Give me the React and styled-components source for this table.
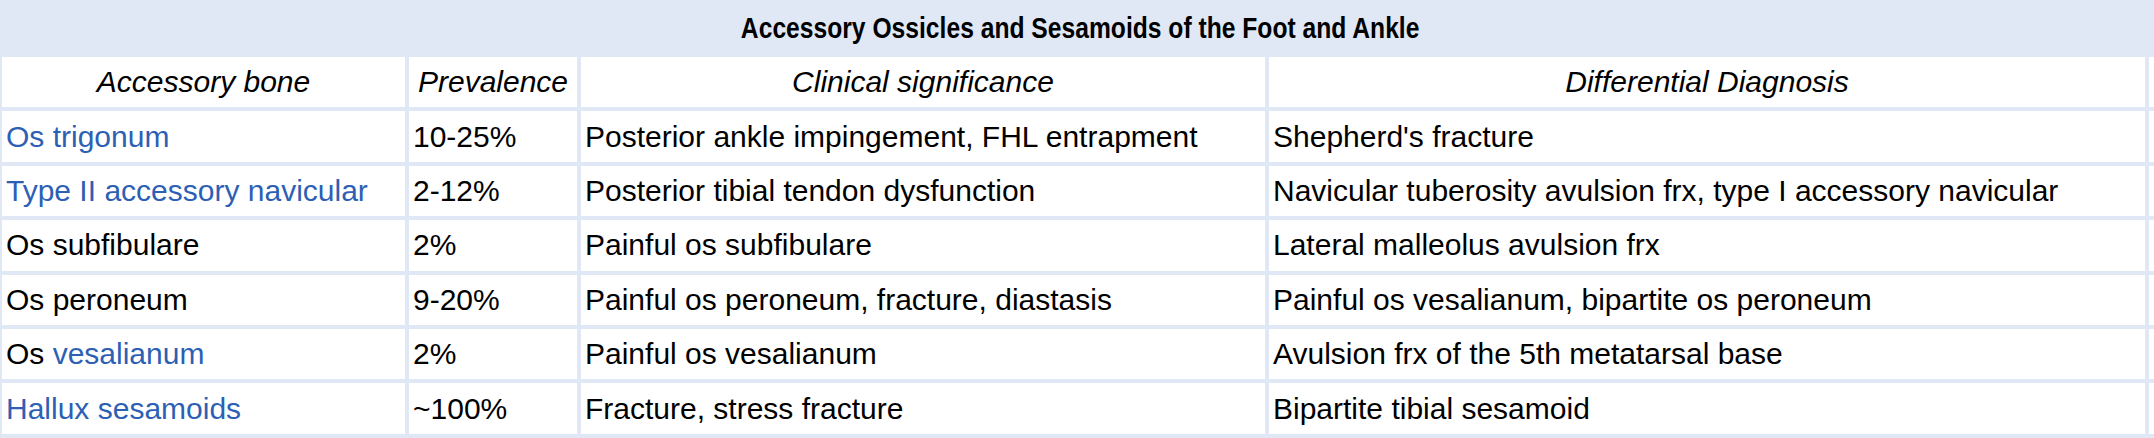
import React from 'react';
import styled, { createGlobalStyle } from 'styled-components';

const GlobalStyle = createGlobalStyle`
    html, body {
        margin: 0;
        padding: 0;
        background: #ffffff;
        overflow: hidden;
    }
    body {
        font-family: "Liberation Sans", Arial, sans-serif;
        color: #000000;
    }
`;

const Wrapper = styled.div`
    width: 2165px;
    margin-left: -2px;
    background: #e0e8f6;
`;

const Title = styled.div`
    height: 53px;
    display: flex;
    align-items: center;
    justify-content: center;
    padding-top: 4px;
    box-sizing: border-box;
`;

// condensed bold caption, like a narrow Helvetica
const TitleText = styled.span`
    display: inline-block;
    font-size: 29px;
    font-weight: 700;
    white-space: nowrap;
    transform: scaleX(0.85);
`;

const Table = styled.table`
    width: 2165px;
    table-layout: fixed;
    border-collapse: separate;
    border-spacing: 4px;
    font-size: 30px;
`;

const Row = styled.tr`
    height: 50.4px;
`;

const HeadCell = styled.th`
    background: #ffffff;
    font-weight: 400;
    font-style: italic;
    text-align: center;
    padding: 0 4px;
    white-space: nowrap;
    overflow: hidden;
`;

const Cell = styled.td`
    background: #ffffff;
    padding: 0 4px;
    vertical-align: middle;
    white-space: nowrap;
    overflow: hidden;
`;

const Link = styled.a`
    color: #2d5fb5;
    text-decoration: none;
`;

const columns = [
    { label: 'Accessory bone', width: 403 },
    { label: 'Prevalence', width: 168 },
    { label: 'Clinical significance', width: 684 },
    { label: 'Differential Diagnosis', width: 876 },
    { label: '', width: 10 },
];

const rows = [
    {
        bone: [{ text: 'Os trigonum', link: true }],
        prevalence: '10-25%',
        clinical: 'Posterior ankle impingement, FHL entrapment',
        differential: "Shepherd's fracture",
    },
    {
        bone: [{ text: 'Type II accessory navicular', link: true }],
        prevalence: '2-12%',
        clinical: 'Posterior tibial tendon dysfunction',
        differential: 'Navicular tuberosity avulsion frx, type I accessory navicular',
    },
    {
        bone: [{ text: 'Os subfibulare' }],
        prevalence: '2%',
        clinical: 'Painful os subfibulare',
        differential: 'Lateral malleolus avulsion frx',
    },
    {
        bone: [{ text: 'Os peroneum' }],
        prevalence: '9-20%',
        clinical: 'Painful os peroneum, fracture, diastasis',
        differential: 'Painful os vesalianum, bipartite os peroneum',
    },
    {
        bone: [{ text: 'Os ' }, { text: 'vesalianum', link: true }],
        prevalence: '2%',
        clinical: 'Painful os vesalianum',
        differential: 'Avulsion frx of the 5th metatarsal base',
    },
    {
        bone: [{ text: 'Hallux sesamoids', link: true }],
        prevalence: '~100%',
        clinical: 'Fracture, stress fracture',
        differential: 'Bipartite tibial sesamoid',
    },
];

const App = () => {
    return (
        <>
            <GlobalStyle />
            <Wrapper>
                <Title>
                    <TitleText>Accessory Ossicles and Sesamoids of the Foot and Ankle</TitleText>
                </Title>
                <Table>
                    <colgroup>
                        {columns.map((col, i) => (
                            <col key={i} style={{ width: col.width }} />
                        ))}
                    </colgroup>
                    <thead>
                        <Row>
                            {columns.map((col, i) => (
                                <HeadCell key={i}>{col.label}</HeadCell>
                            ))}
                        </Row>
                    </thead>
                    <tbody>
                        {rows.map((row, i) => (
                            <Row key={i}>
                                <Cell>
                                    {row.bone.map((part, j) =>
                                        part.link
                                            ? <Link key={j} href="#">{part.text}</Link>
                                            : <span key={j}>{part.text}</span>
                                    )}
                                </Cell>
                                <Cell>{row.prevalence}</Cell>
                                <Cell>{row.clinical}</Cell>
                                <Cell>{row.differential}</Cell>
                                <Cell />
                            </Row>
                        ))}
                    </tbody>
                </Table>
            </Wrapper>
        </>
    );
};

export default App;
